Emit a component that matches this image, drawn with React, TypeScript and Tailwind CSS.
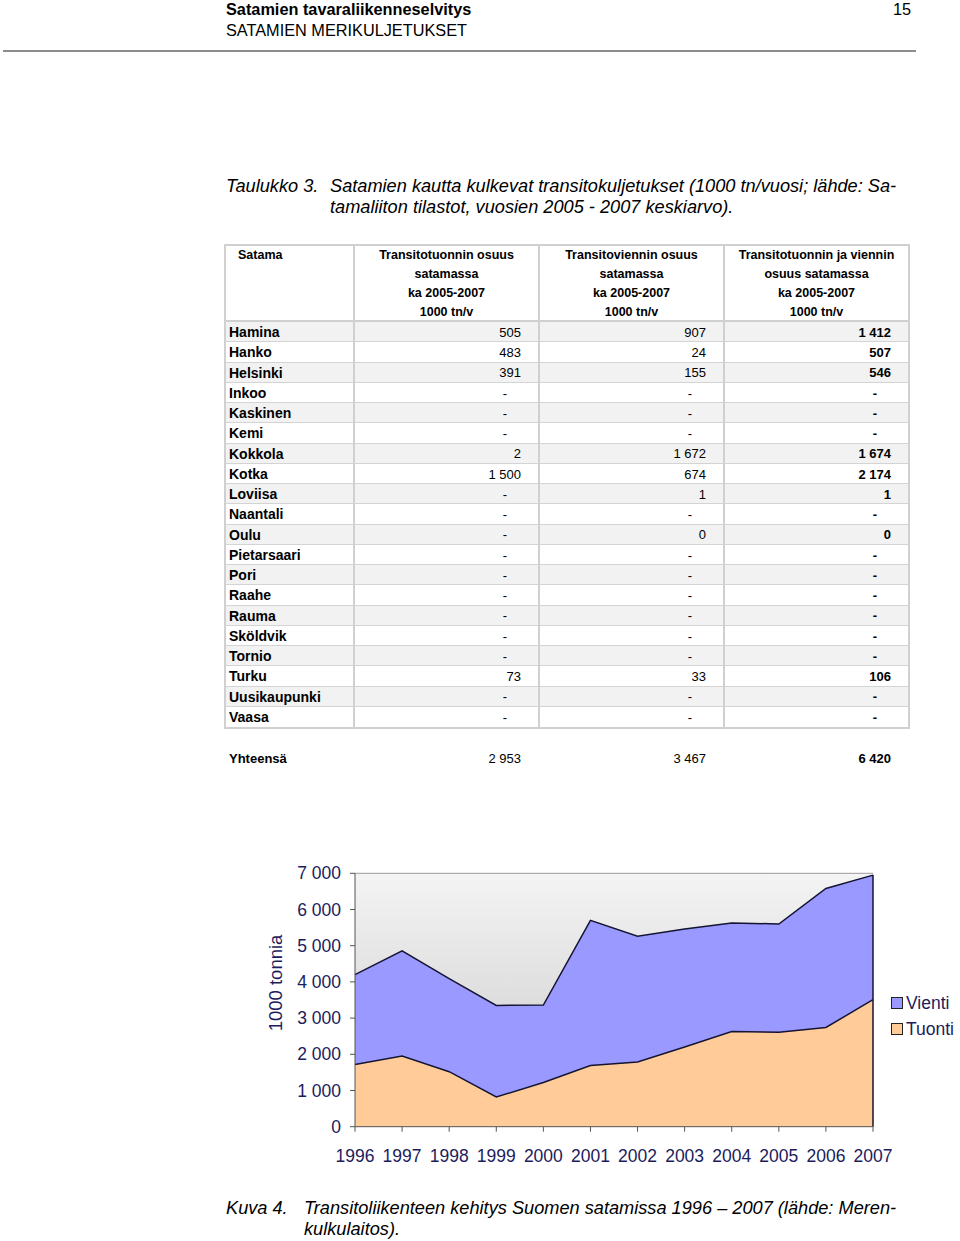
import React from "react";

const ports: string[][] = [
  ["Hamina", "505", "907", "1 412"],
  ["Hanko", "483", "24", "507"],
  ["Helsinki", "391", "155", "546"],
  ["Inkoo", "-", "-", "-"],
  ["Kaskinen", "-", "-", "-"],
  ["Kemi", "-", "-", "-"],
  ["Kokkola", "2", "1 672", "1 674"],
  ["Kotka", "1 500", "674", "2 174"],
  ["Loviisa", "-", "1", "1"],
  ["Naantali", "-", "-", "-"],
  ["Oulu", "-", "0", "0"],
  ["Pietarsaari", "-", "-", "-"],
  ["Pori", "-", "-", "-"],
  ["Raahe", "-", "-", "-"],
  ["Rauma", "-", "-", "-"],
  ["Sköldvik", "-", "-", "-"],
  ["Tornio", "-", "-", "-"],
  ["Turku", "73", "33", "106"],
  ["Uusikaupunki", "-", "-", "-"],
  ["Vaasa", "-", "-", "-"],
];

const years = [1996, 1997, 1998, 1999, 2000, 2001, 2002, 2003, 2004, 2005, 2006, 2007];
// tuonti + vienti stacked (total)
const tuonti = [1720, 1950, 1520, 820, 1220, 1690, 1790, 2200, 2630, 2610, 2740, 3510];
const total = [4200, 4860, 4090, 3350, 3360, 5700, 5260, 5460, 5630, 5600, 6580, 6950];

const NAVY = "#1c1c5c";
const sans = "font-['Liberation_Sans',Arial,sans-serif]";

function Num({ v, bold }: { v: string; bold?: boolean }) {
  const dash = v === "-";
  return (
    <div
      className={`flex items-center justify-end border-r-2 border-[#d0d0d0] text-[13px] ${bold ? "font-bold" : ""} ${
        dash ? "pr-[31px]" : "pr-[17px]"
      }`}
    >
      {v}
    </div>
  );
}

function Chart() {
  const x = (i: number) => 95 + (i * 518) / 11;
  const y = (v: number) => 271.7 - (v * 253.4) / 7000;
  const base = y(0);
  const tu = tuonti.map((v, i) => `${x(i)},${y(v)}`);
  const to = total.map((v, i) => `${x(i)},${y(v)}`);
  const tuArea = `M${x(0)},${base} L${tu.join(" L")} L${x(11)},${base} Z`;
  const viArea = `M${to.join(" L")} L${[...tu].reverse().join(" L")} Z`;

  return (
    <svg width="700" height="320" className="block ml-[260px]" style={{ fontFamily: "'Liberation Sans', Arial, sans-serif" }}>
      <defs>
        <linearGradient id="bg" x1="0" y1="0" x2="0" y2="1">
          <stop offset="0" stopColor="#f4f4f4" />
          <stop offset="1" stopColor="#c8c8c8" />
        </linearGradient>
      </defs>
      <rect x={95} y={18.3} width={518} height={253.4} fill="url(#bg)" />
      <line x1={95} y1={18.3} x2={613} y2={18.3} stroke="#9a9a9a" strokeWidth={1} />
      <path d={viArea} fill="#9999ff" />
      <path d={tuArea} fill="#ffcc99" />
      <polyline points={to.join(" ")} fill="none" stroke="#141432" strokeWidth={1.5} />
      <polyline points={tu.join(" ")} fill="none" stroke="#141432" strokeWidth={1.5} />
      <line x1={613} y1={y(total[11])} x2={613} y2={base} stroke="#141432" strokeWidth={1.5} />
      <line x1={95} y1={18.3} x2={95} y2={base} stroke="#555" strokeWidth={1} />
      <line x1={95} y1={base} x2={613} y2={base} stroke="#555" strokeWidth={1} />
      {[0, 1, 2, 3, 4, 5, 6, 7].map((k) => (
        <g key={k}>
          <line x1={90} y1={y(k * 1000)} x2={95} y2={y(k * 1000)} stroke="#555" />
          <text x={81} y={y(k * 1000) + 6} textAnchor="end" fontSize={17.5} fill={NAVY}>
            {k === 0 ? "0" : `${k} 000`}
          </text>
        </g>
      ))}
      {years.map((yr, i) => (
        <g key={yr}>
          <line x1={x(i)} y1={base} x2={x(i)} y2={base + 5} stroke="#555" />
          <text x={x(i)} y={306.5} textAnchor="middle" fontSize={17.5} fill={NAVY}>
            {yr}
          </text>
        </g>
      ))}
      <text
        x={15}
        y={128}
        textAnchor="middle"
        dominantBaseline="central"
        fontSize={18.5}
        fill={NAVY}
        transform="rotate(-90 15 128)"
      >
        1000 tonnia
      </text>
      <rect x={631.5} y={142.5} width={11} height={11} fill="#9999ff" stroke="#222" strokeWidth={1} />
      <text x={646} y={153.5} fontSize={17.5} fill={NAVY}>
        Vienti
      </text>
      <rect x={631.5} y={168.5} width={11} height={11} fill="#ffcc99" stroke="#222" strokeWidth={1} />
      <text x={646} y={179.5} fontSize={17.5} fill={NAVY}>
        Tuonti
      </text>
    </svg>
  );
}

export default function App() {
  return (
    <main className={`w-[960px] h-[1241px] bg-white text-black overflow-hidden ${sans}`}>
      {/* page header */}
      <div className="pl-[226px] pr-[49px]">
        <div className="flex justify-between text-[16.3px] leading-[18px]">
          <span className="font-bold">Satamien tavaraliikenneselvitys</span>
          <span>15</span>
        </div>
        <div className="mt-[3px] text-[16.3px] leading-[18px]">SATAMIEN MERIKULJETUKSET</div>
      </div>
      <div className="ml-[3px] mt-[11px] w-[913px] h-[2px] bg-[#8c8c8c]" />

      {/* caption */}
      <div className="pl-[226px] mt-[124px] flex italic text-[18.2px] leading-[21px]">
        <div className="w-[104px]">Taulukko 3.</div>
        <div className="whitespace-nowrap">
          Satamien kautta kulkevat transitokuljetukset (1000 tn/vuosi; lähde: Sa-
          <br />
          tamaliiton tilastot, vuosien 2005 - 2007 keskiarvo).
        </div>
      </div>

      {/* table */}
      <div className="ml-[224px] mt-[26px] w-[686px] border-2 border-[#d0d0d0]">
        <div className="grid grid-cols-[129px_185px_185px_183px] h-[76px] border-b-2 border-[#d0d0d0] text-[12.5px] leading-[19px] font-bold">
          <div className="border-r-2 border-[#d0d0d0] pl-[12px]">Satama</div>
          <div className="border-r-2 border-[#d0d0d0] text-center">
            Transitotuonnin osuus
            <br />
            satamassa
            <br />
            ka 2005-2007
            <br />
            1000 tn/v
          </div>
          <div className="border-r-2 border-[#d0d0d0] text-center">
            Transitoviennin osuus
            <br />
            satamassa
            <br />
            ka 2005-2007
            <br />
            1000 tn/v
          </div>
          <div className="text-center">
            Transitotuonnin ja viennin
            <br />
            osuus satamassa
            <br />
            ka 2005-2007
            <br />
            1000 tn/v
          </div>
        </div>
        {ports.map((p, i) => (
          <div
            key={p[0]}
            className={`grid grid-cols-[129px_185px_185px_183px] h-[20.25px] border-b border-[#d4d4d4] last:border-b-0 ${
              i % 2 === 0 ? "bg-[#f2f2f2]" : "bg-white"
            }`}
          >
            <div className="flex items-center border-r-2 border-[#d0d0d0] pl-[3px] text-[14px] font-bold">{p[0]}</div>
            <Num v={p[1]} />
            <Num v={p[2]} />
            <div
              className={`flex items-center justify-end text-[13px] font-bold ${p[3] === "-" ? "pr-[31px]" : "pr-[17px]"}`}
            >
              {p[3]}
            </div>
          </div>
        ))}
      </div>

      {/* totals */}
      <div className="ml-[226px] mt-[20px] grid grid-cols-[129px_185px_185px_183px] h-[20px] items-center text-[13px]">
        <div className="pl-[3px] font-bold">Yhteensä</div>
        <div className="text-right pr-[19px]">2 953</div>
        <div className="text-right pr-[19px]">3 467</div>
        <div className="text-right pr-[17px] font-bold">6 420</div>
      </div>

      {/* chart */}
      <div className="mt-[86px]">
        <Chart />
      </div>

      {/* figure caption */}
      <div className="pl-[226px] mt-[23px] flex italic text-[18.2px] leading-[21px]">
        <div className="w-[78px]">Kuva 4.</div>
        <div className="whitespace-nowrap">
          Transitoliikenteen kehitys Suomen satamissa 1996 – 2007 (lähde: Meren-
          <br />
          kulkulaitos).
        </div>
      </div>
    </main>
  );
}
